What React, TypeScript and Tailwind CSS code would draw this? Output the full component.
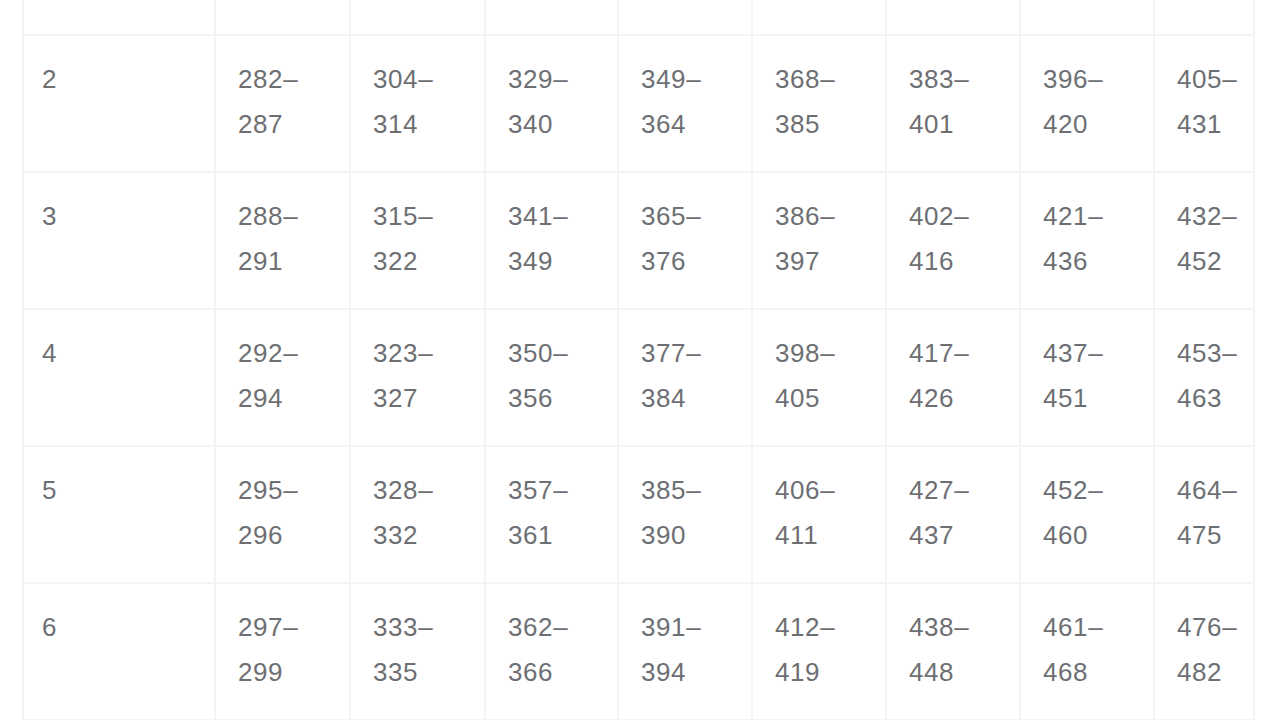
const ROWS: [string, [string, string][]][] = [
  ['2', [['282', '287'], ['304', '314'], ['329', '340'], ['349', '364'], ['368', '385'], ['383', '401'], ['396', '420'], ['405', '431']]],
  ['3', [['288', '291'], ['315', '322'], ['341', '349'], ['365', '376'], ['386', '397'], ['402', '416'], ['421', '436'], ['432', '452']]],
  ['4', [['292', '294'], ['323', '327'], ['350', '356'], ['377', '384'], ['398', '405'], ['417', '426'], ['437', '451'], ['453', '463']]],
  ['5', [['295', '296'], ['328', '332'], ['357', '361'], ['385', '390'], ['406', '411'], ['427', '437'], ['452', '460'], ['464', '475']]],
  ['6', [['297', '299'], ['333', '335'], ['362', '366'], ['391', '394'], ['412', '419'], ['438', '448'], ['461', '468'], ['476', '482']]],
];

const WIDTHS = [192, 135, 135, 133, 134, 134, 134, 134, 100];

const cell = 'border-2 border-[#f4f4f4] pt-[21px] align-top text-left font-normal';

export default function App() {
  return (
    <div className="h-[720px] w-[1279px] overflow-hidden bg-white font-['Liberation_Sans',Arial,sans-serif] text-[26px] leading-[45px] tracking-[0.6px] text-[#6e6f73]">
      <table className="ml-[22px] table-fixed border-collapse">
        <colgroup>
          {WIDTHS.map((w, i) => (
            <col key={i} style={{ width: w }} />
          ))}
        </colgroup>
        <tbody>
          {/* row 1 scrolled off the top, only its lower edge shows */}
          <tr className="h-[35px]">
            {WIDTHS.map((_, i) => (
              <td key={i} className="border-2 border-t-0 border-[#f4f4f4]" />
            ))}
          </tr>
          {ROWS.map(([label, ranges]) => (
            <tr key={label} className="h-[137px]">
              <td className={`${cell} pl-[18px]`}>{label}</td>
              {ranges.map(([lo, hi]) => (
                <td key={lo} className={`${cell} pl-[22px]`}>
                  {lo}–
                  <br />
                  {hi}
                </td>
              ))}
            </tr>
          ))}
        </tbody>
      </table>
    </div>
  );
}
